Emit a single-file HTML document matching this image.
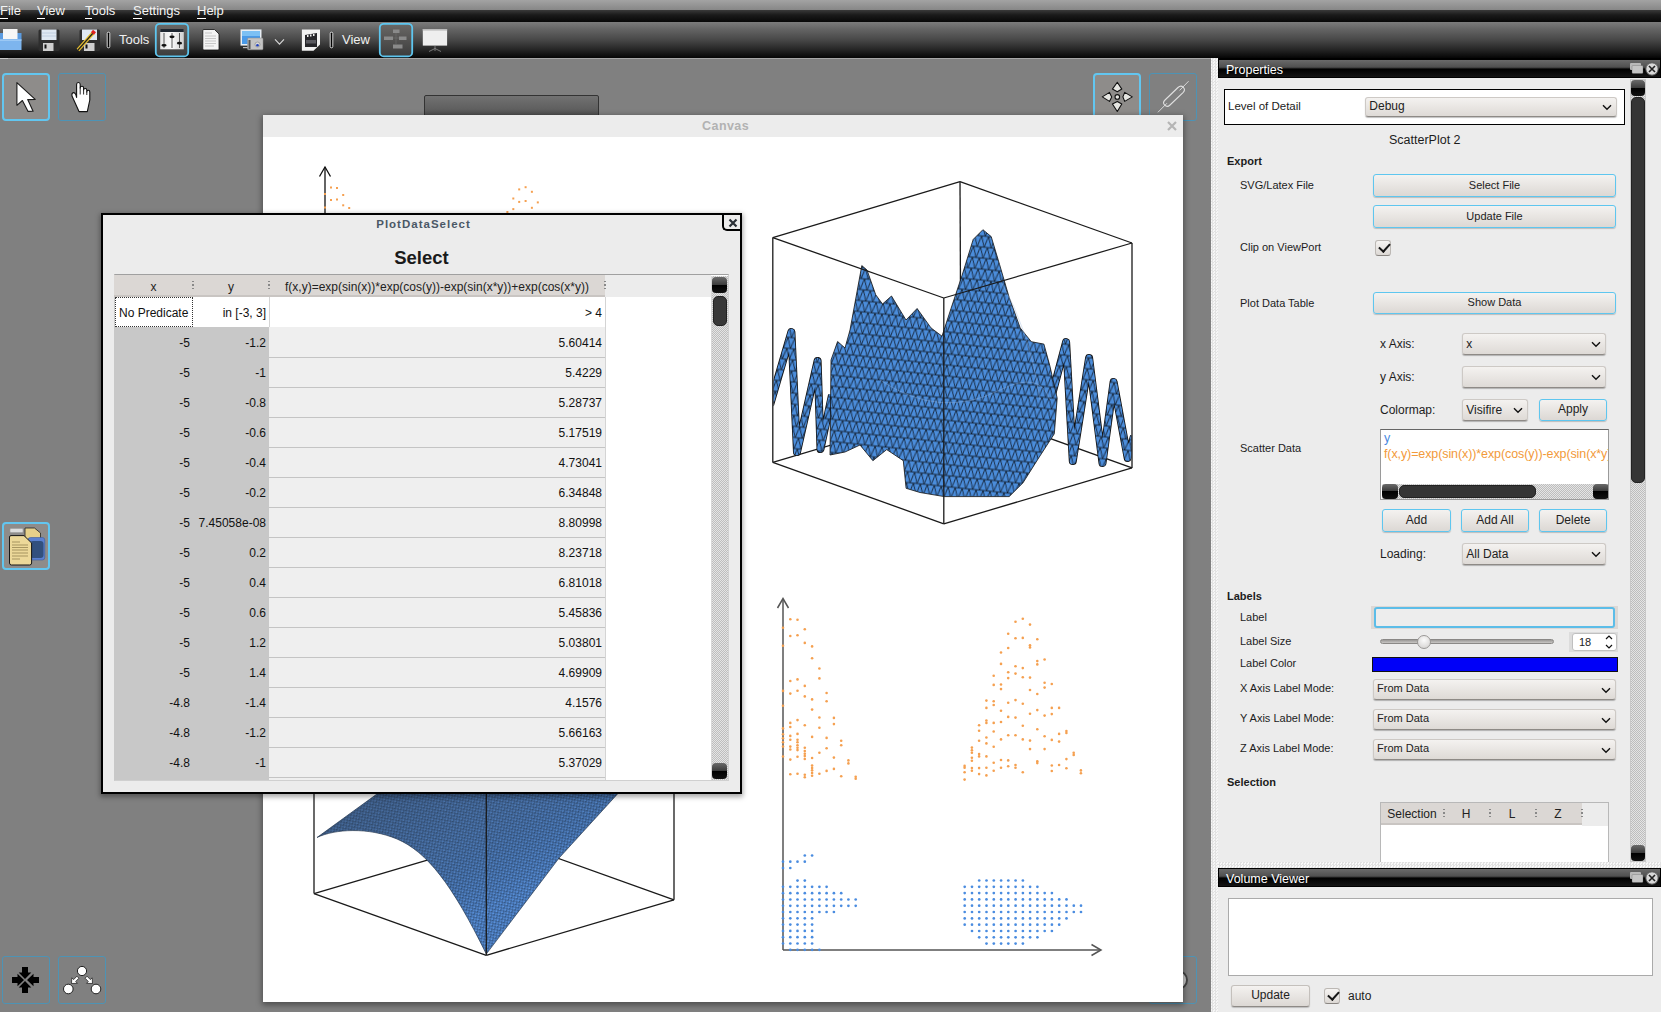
<!DOCTYPE html>
<html><head><meta charset="utf-8">
<style>
*{box-sizing:border-box;margin:0;padding:0}
html,body{width:1661px;height:1012px;overflow:hidden;background:#808080;font-family:"Liberation Sans",sans-serif;font-size:12px;color:#222}
.a{position:absolute}
#menubar{left:0;top:0;width:1661px;height:22px;background:linear-gradient(#a3a3a3 0px,#878787 10px,#393939 10px,#1a1a1a 15px,#080808 22px)}
#menubar span{position:absolute;top:3px;color:#f4f4f4;font-size:13px}
#menubar span u{text-decoration:none;border-bottom:1px solid #fff}
#toolbar{left:0;top:22px;width:1661px;height:36px;background:linear-gradient(#7c7c7c 0px,#626262 8px,#474747 18px,#242424 28px,#050505 36px)}
#toolbar .t{position:absolute;color:#f0f0f0;font-size:13px;top:9px}
.sep{position:absolute;width:4px;height:18px;top:9px;border:1px solid #ddd;border-radius:2px;background:#111}
.tbact{position:absolute;width:34px;height:34px;top:1px;border:2px solid #5bc0ea;border-radius:4px;background:linear-gradient(#5a5a5a,#3a3a3a)}
.toolbtn{position:absolute;width:48px;height:48px;border:1px solid #4d93b5;border-radius:3px}
.toolbtn.act{border:2px solid #62c6f0;background:#8e8c8a;border-radius:4px}
.panel{background:#ececec}
.dtitle{position:absolute;height:19px;overflow:hidden;border:1px solid #000;background:linear-gradient(#6a6a6a 0px,#505050 7px,#333 8px,#000 9px,#141414 17px);color:#fff;font-size:12.5px;padding-left:7px;line-height:21px}
.th{position:absolute;top:275px;height:22px;line-height:24px;text-align:center;font-size:12px;color:#222;white-space:nowrap;overflow:hidden}
.dots{width:1.5px;height:9px;background:repeating-linear-gradient(#888 0 1.2px,transparent 1.2px 3.5px)}
.td{position:absolute;height:30px;line-height:32px;font-size:12px;color:#111;white-space:nowrap}
.tr{position:absolute;left:0;width:491px;height:30px;line-height:32px;font-size:12px;color:#111;white-space:nowrap}
.tr .cx{position:absolute;left:0;width:76px;text-align:right}
.tr .cy{position:absolute;left:79px;width:73px;text-align:right}
.tr .cf{position:absolute;left:155px;width:333px;text-align:right}
.tr:after{content:"";position:absolute;left:155px;width:336px;bottom:-1px;height:1px;background:#c4c4c4}
.sbbtn{width:15px;height:16px;border-radius:4px;background:linear-gradient(#6a6a6a 0,#3a3a3a 8px,#000 8px,#111 16px)}
.lbl{position:absolute;white-space:nowrap;color:#1c1c1c;line-height:normal}
.cb{position:absolute;white-space:nowrap;color:#222;background:linear-gradient(#f4f2f0,#dedad6);border:1px solid #cdc9c5;border-bottom-color:#8e8a86;border-radius:3px;box-shadow:0 1px 1px rgba(0,0,0,0.25)}
.chev{display:block}
.btn{position:absolute;white-space:nowrap;color:#222;text-align:center;background:linear-gradient(#f4f2f0,#dcd8d4);border:1.5px solid #5ec6ef;border-radius:3px;box-shadow:0 1px 1px rgba(0,0,0,0.2)}
.btn.nb{border:1px solid #c4c0bc;border-bottom-color:#8e8a86}
.chk{position:absolute;width:16px;height:16px;border-radius:3px;background:linear-gradient(#f6f4f2,#dcd8d4);border:1px solid #bcb8b4;border-bottom-color:#8a8682}
.chk:after{content:"";position:absolute;left:2.5px;top:2px;width:9px;height:5px;border-left:2.2px solid #161616;border-bottom:2.2px solid #161616;transform:rotate(-48deg)}
.th2{position:absolute;top:803px;height:22px;line-height:22px;text-align:center;font-size:12px;color:#222;white-space:nowrap}
.sbbtnh{width:16px;height:15px;border-radius:4px;background:linear-gradient(#6a6a6a 0,#3a3a3a 7px,#000 7px,#111 15px)}
</style></head>
<body>
<!-- menu bar -->
<div id="menubar" class="a">
 <span style="left:0px"><u>F</u>ile</span>
 <span style="left:37px"><u>V</u>iew</span>
 <span style="left:85px"><u>T</u>ools</span>
 <span style="left:133px"><u>S</u>ettings</span>
 <span style="left:197px"><u>H</u>elp</span>
</div>
<!-- toolbar -->
<div id="toolbar" class="a">
 <svg class="a" style="left:0;top:0" width="460" height="36" viewBox="0 22 460 36">
  <!-- printer -->
  <rect x="0" y="33" width="21.5" height="7" fill="#5b9be0"/>
  <rect x="3" y="29" width="14.5" height="10" fill="#f6f6f6"/>
  <rect x="0" y="39.5" width="21.5" height="10.5" fill="#7db5ee"/>
  <rect x="0" y="39.5" width="21.5" height="1.2" fill="#a9d0f7"/>
  <!-- floppy -->
  <rect x="38.5" y="29.5" width="21" height="21.5" rx="1.5" fill="#2e2e2e"/>
  <rect x="41.5" y="29.5" width="15" height="10.5" fill="#dfe8f2"/>
  <line x1="42" y1="33" x2="56" y2="33" stroke="#b8c8dc" stroke-width="0.8"/>
  <line x1="42" y1="36" x2="56" y2="36" stroke="#b8c8dc" stroke-width="0.8"/>
  <rect x="43" y="43" width="10.5" height="8" fill="#cfcfcf"/>
  <rect x="44.5" y="44.5" width="2" height="4" fill="#111"/>
  <!-- floppy + pencil -->
  <rect x="79.5" y="29.5" width="20.5" height="21.5" rx="1.5" fill="#2e2e2e"/>
  <rect x="82" y="29.5" width="15" height="10.5" fill="#dfe8f2"/>
  <rect x="84" y="43" width="10.5" height="8" fill="#cfcfcf"/>
  <rect x="85.5" y="44.5" width="2" height="4" fill="#111"/>
  <line x1="78" y1="50" x2="93.5" y2="32.5" stroke="#e8c030" stroke-width="3.6"/>
  <line x1="78" y1="50" x2="93.5" y2="32.5" stroke="#222" stroke-width="1.2"/>
  <line x1="92.5" y1="33.5" x2="94.5" y2="31" stroke="#e02020" stroke-width="3.8"/>
  <!-- separator -->
  <rect x="107.2" y="32.2" width="2.6" height="15.6" rx="1.3" fill="#000" stroke="#f0f0f0" stroke-width="0.9"/>
  <!-- active button 1 -->
  <rect x="155.8" y="23.8" width="32.4" height="32.6" rx="4" fill="url(#btng)" stroke="#5ec6ef" stroke-width="1.8"/>
  <defs>
   <linearGradient id="btng" x1="0" y1="0" x2="0" y2="1"><stop offset="0" stop-color="#6a6866"/><stop offset="1" stop-color="#3c3c3c"/></linearGradient>
   <linearGradient id="mixg" x1="0" y1="0" x2="1" y2="0"><stop offset="0" stop-color="#e6e6e6"/><stop offset="0.5" stop-color="#fafafa"/><stop offset="1" stop-color="#d0d0d0"/></linearGradient>
  </defs>
  <rect x="160.2" y="29" width="23.6" height="20.3" fill="url(#mixg)"/>
  <rect x="160.2" y="29" width="23.6" height="3" fill="#1e2630"/>
  <line x1="164" y1="33" x2="164" y2="48" stroke="#333" stroke-width="0.8"/>
  <line x1="172" y1="33" x2="172" y2="48" stroke="#333" stroke-width="0.8"/>
  <line x1="179.5" y1="33" x2="179.5" y2="48" stroke="#333" stroke-width="0.8"/>
  <ellipse cx="164" cy="45.3" rx="2.6" ry="1.4" fill="#111"/>
  <ellipse cx="172" cy="36.8" rx="2.6" ry="1.4" fill="#111"/>
  <ellipse cx="179.5" cy="43.2" rx="2.6" ry="1.4" fill="#111"/>
  <!-- document -->
  <path d="M202.8 30.5 Q202.8 29.5 204 29.5 L214.5 29.5 L219 34 L219 49 Q219 50 218 50 L204 50 Q202.8 50 202.8 49 Z" fill="#f4f4f4" stroke="#111" stroke-width="0.8"/>
  <g stroke="#aaa" stroke-width="0.6"><line x1="205" y1="33" x2="212" y2="33"/><line x1="205" y1="36" x2="216" y2="36"/><line x1="205" y1="38.5" x2="216" y2="38.5"/><line x1="205" y1="41" x2="216" y2="41"/><line x1="205" y1="43.5" x2="216" y2="43.5"/><line x1="205" y1="46" x2="214" y2="46"/></g>
  <!-- monitor + camera -->
  <rect x="240.5" y="29.4" width="21" height="16.2" fill="#e8eef4"/>
  <rect x="242" y="31" width="18" height="13" fill="#4a9ae8"/>
  <rect x="242" y="31" width="18" height="5" fill="#7cc0f4"/>
  <rect x="243" y="47" width="8" height="1.2" fill="#bbb"/>
  <rect x="247.5" y="38" width="15.5" height="11.8" rx="1" fill="#c4c4c4" stroke="#888" stroke-width="0.5"/>
  <rect x="248.5" y="40" width="2" height="9" fill="#555"/>
  <circle cx="257.5" cy="44.5" r="2.5" fill="#d8d8d8" stroke="#777" stroke-width="0.5"/>
  <circle cx="257.5" cy="45.3" r="1.3" fill="#2040c0"/>
  <!-- chevron -->
  <polyline points="275,39.3 279.5,44.2 284,39.3" fill="none" stroke="#d8d8d8" stroke-width="1.1"/>
  <!-- clapboard -->
  <path d="M301.9 29.4 L320 29.4 L320 44.5 L313.5 50.7 L301.9 50.7 Z" fill="#f2f2f2"/>
  <path d="M305 35 L317 33 L317 47 L305 47 Z" fill="#26262a"/>
  <g fill="#f2f2f2"><rect x="307" y="35" width="1.5" height="2"/><rect x="310" y="34.5" width="1.5" height="2"/><rect x="313" y="34" width="1.5" height="2"/></g>
  <rect x="306" y="40" width="10" height="3.5" fill="#5a5a60"/>
  <!-- separator 2 -->
  <rect x="330.2" y="32.2" width="2.6" height="15.6" rx="1.3" fill="#000" stroke="#f0f0f0" stroke-width="0.9"/>
  <!-- active button 2 -->
  <rect x="379.8" y="23.8" width="32.4" height="32.6" rx="4" fill="url(#btng)" stroke="#5ec6ef" stroke-width="1.8"/>
  <g fill="#8a8a8a"><rect x="393" y="29.5" width="6.5" height="3.5"/><rect x="384" y="36.5" width="9" height="3.5"/><rect x="399" y="36.5" width="7.5" height="3.5"/><rect x="393" y="44.5" width="9.5" height="4"/></g>
  <g stroke="#777" stroke-width="0.5"><line x1="396" y1="33" x2="396" y2="44.5"/><line x1="393" y1="38" x2="399" y2="38"/></g>
  <!-- projector -->
  <rect x="422.8" y="29" width="24.3" height="16.6" fill="#eeeeee"/>
  <rect x="422.8" y="29" width="24.3" height="1.6" fill="#bdbdbd"/>
  <g stroke="#9a9a9a" stroke-width="0.7"><line x1="435" y1="45.6" x2="435" y2="51"/><line x1="435" y1="48.5" x2="429" y2="51.5"/><line x1="435" y1="48.5" x2="441" y2="51.5"/></g>
 </svg>
 <span class="t" style="left:119px;top:10px">Tools</span>
 <span class="t" style="left:342px;top:10px">View</span>
</div>

<!-- main area -->
<div class="a" style="left:0;top:58px;width:1212px;height:954px;background:#808080"></div>
<div class="a" style="left:0;top:58px;width:1211px;height:1px;background:#a6a6a6"></div><div class="a" style="left:0;top:58px;width:8px;height:1px;background:#c8c8c8"></div>
<!-- left tool buttons -->
<div class="toolbtn act a" style="left:2px;top:73px;width:48px;height:48px"></div>
<svg class="a" style="left:0;top:58px" width="120" height="80" viewBox="0 58 120 80">
 <path d="M16.9,82.6 L16.9,105.3 L22.4,100.5 L28.1,111.4 L33.1,111.2 L27.7,99.6 L35.2,99.4 Z" fill="#fff" stroke="#1a1a1a" stroke-width="1.1" stroke-linejoin="round"/>
 <path d="M76.6,97.4 L76.6,84.5 Q76.6,82.5 78.4,82.5 Q80.2,82.5 80.2,84.5 L80.2,88 Q80.2,86.3 82,86.3 Q83.6,86.3 83.6,88 L83.6,90 Q83.7,88.5 85.2,88.5 Q86.8,88.5 86.8,90 L86.8,92 Q86.9,90.3 88.3,90.3 Q89.8,90.3 89.8,92 L89.8,100 L87.3,111.6 L79,111.6 L72,96 Q71.5,93 73.3,92.6 Q75,92.4 75.8,94.6 Z" fill="#fff" stroke="#111" stroke-width="1.1" stroke-linejoin="round"/>
 <g stroke="#111" stroke-width="0.9"><line x1="80.2" y1="87.5" x2="80.2" y2="94.5"/><line x1="83.6" y1="89.5" x2="83.6" y2="94.5"/><line x1="86.8" y1="91.5" x2="86.8" y2="95"/></g>
</svg>
<div class="toolbtn a" style="left:58px;top:73px;width:48px;height:48px"></div>
<!-- doc button -->
<div class="toolbtn act a" style="left:2px;top:522px;width:48px;height:48px"></div>
<svg class="a" style="left:0;top:520px" width="60" height="60" viewBox="0 520 60 60">
 <rect x="10" y="528.5" width="13" height="4" rx="1" fill="#ddd" stroke="#999" stroke-width="0.5"/>
 <path d="M25 528 L34.5 528 L40.5 533 L40.5 541 L25 541 Z" fill="#e6d08a" stroke="#222" stroke-width="0.8"/>
 <rect x="28" y="537.5" width="16.8" height="22.5" rx="2.5" fill="#5a80d0" stroke="#3c5a9a" stroke-width="0.6"/>
 <rect x="30" y="541" width="13.5" height="17" rx="3" fill="#32507e"/>
 <path d="M9.5 537 Q9.5 535.6 11 535.6 L24 535.6 L31.6 543 L31.6 563 Q31.6 565 29.6 565 L11.5 565 Q9.5 565 9.5 563 Z" fill="#ecd899" stroke="#161616" stroke-width="1"/>
 <g stroke="#7a6a3a" stroke-width="0.6"><line x1="12" y1="542" x2="20" y2="542"/><line x1="12" y1="545" x2="28" y2="545"/><line x1="12" y1="547.5" x2="28" y2="547.5"/><line x1="12" y1="550" x2="28" y2="550"/><line x1="12" y1="553" x2="28" y2="553"/><line x1="12" y1="556" x2="28" y2="556"/><line x1="12" y1="559" x2="20" y2="559"/></g>
</svg>
<!-- bottom buttons -->
<div class="toolbtn a" style="left:2px;top:956px;width:48px;height:48px"></div>
<div class="toolbtn a" style="left:58px;top:956px;width:48px;height:48px"></div>
<svg class="a" style="left:0;top:950px" width="120" height="60" viewBox="0 950 120 60">
 <g fill="#000">
  <path d="M22 967 L28 967 L28 972.5 L31.3 972.5 L25 979 L18.7 972.5 L22 972.5 Z"/>
  <path d="M22 993 L28 993 L28 987.5 L31.3 987.5 L25 981 L18.7 987.5 L22 987.5 Z"/>
  <path d="M12 977 L12 983 L17.5 983 L17.5 986.3 L24 980 L17.5 973.7 L17.5 977 Z"/>
  <path d="M39 977 L39 983 L33.5 983 L33.5 986.3 L27 980 L33.5 973.7 L33.5 977 Z"/>
 </g>
 <g fill="#fff" stroke="#111" stroke-width="0.9">
  <circle cx="82" cy="971" r="4.6"/><circle cx="68.3" cy="989" r="4.8"/><circle cx="96" cy="989" r="4.8"/>
  <path d="M71.5,983.5 L71.8,977.8 L73.7,979.6 L76.9,976.2 L78.9,978.2 L75.7,981.5 L77.4,983.3 Z" stroke-width="0.7" stroke-linejoin="round"/>
  <path d="M92.5,983.5 L92.2,977.8 L90.3,979.6 L87.1,976.2 L85.1,978.2 L88.3,981.5 L86.6,983.3 Z" stroke-width="0.7" stroke-linejoin="round"/>
 </g>
</svg>
<!-- top right buttons -->
<div class="toolbtn act a" style="left:1093px;top:73px;width:48px;height:48px"></div>
<div class="toolbtn a" style="left:1149px;top:73px;width:48px;height:48px"></div>
<svg class="a" style="left:1090px;top:70px" width="120" height="60" viewBox="1090 70 120 60">
 <g fill="#e6e6e2" stroke="#111" stroke-width="1.1" stroke-linejoin="round">
  <path d="M1117.3 82.3 L1121.8 89.1 L1117.3 91.7 L1112.4 89.1 Z"/>
  <path d="M1117.3 111.5 L1121.8 104 L1117.3 101.4 L1112.4 104 Z"/>
  <path d="M1102.3 96.9 L1109.5 92.4 L1111.7 96.9 L1109.5 101.4 Z"/>
  <path d="M1132.3 96.9 L1124.7 92.4 L1122.9 96.9 L1124.7 101.4 Z"/>
  <circle cx="1117.3" cy="96.9" r="2.3"/>
 </g>
 <g fill="none" stroke="#e0e0e0" stroke-width="0.9">
  <line x1="1157.9" y1="112.3" x2="1167" y2="103.2"/><line x1="1179.6" y1="90.4" x2="1188.6" y2="81.2"/>
  <path d="M1165 100 L1178 87.5 Q1180.8 84.8 1183.3 87.3 Q1185.8 89.8 1183 92.6 L1170 105 Q1167.2 107.7 1164.7 105.2 Q1162.2 102.7 1165 100 Z" stroke-width="1.1"/>
 </g>
</svg>
<div class="toolbtn a" style="left:1149px;top:956px;width:48px;height:48px"></div>
<div class="a" style="left:1168px;top:970px;width:20px;height:20px;border-radius:50%;background:#ccc;border:2px solid #444"></div>
<!-- canvas tab -->
<div class="a" style="left:424px;top:95px;width:175px;height:22px;border:1px solid #333;border-radius:2px 2px 0 0;background:linear-gradient(#727272,#5e5e5e 70%,#4c4c4c)"></div>
<!-- canvas -->
<div class="a" style="left:263px;top:115px;width:920px;height:887px;background:#fff;box-shadow:0px 2px 6px 1px rgba(0,0,0,0.4)">
 <div class="a" style="left:0;top:0;width:920px;height:22px;background:#ececec"></div>
 <div class="a" style="left:439px;top:4px;font-weight:bold;color:#b2b2b2;font-size:12.5px;letter-spacing:0.45px">Canvas</div>
 <svg class="a" style="left:903px;top:5px" width="12" height="12"><path d="M2 2 L10 10 M10 2 L2 10" stroke="#b5b5b5" stroke-width="2.2"/></svg>
</div>

<!-- splitter -->
<div class="a" style="left:1211px;top:58px;width:7px;height:954px;background:repeating-conic-gradient(#e2e2e2 0 25%,#f6f6f6 0 50%) 0 0/3px 3px"></div>

<!-- volume viewer -->
<div class="a panel" style="left:1218px;top:862px;width:443px;height:150px"></div>
<div class="a" style="left:1218px;top:863px;width:443px;height:4px;background:repeating-conic-gradient(#e2e2e2 0 25%,#f6f6f6 0 50%) 0 0/3px 3px"></div>
<div class="dtitle" style="left:1218px;top:868px;width:443px">Volume Viewer</div>
<!-- properties dock -->
<div class="a" style="left:1218px;top:58px;width:443px;height:1px;background:#000"></div>
<div class="a panel" style="left:1218px;top:59px;width:443px;height:809px">
</div>
<div class="dtitle" style="left:1218px;top:59px;width:443px">Properties</div>
<div class="a" style="left:1224px;top:89px;width:401px;height:36px;background:#fff;border:1.4px solid #000"></div>
<div class="lbl" style="left:1228px;top:100px;font-size:11.5px;">Level of Detail</div>
<div class="cb" style="left:1365px;top:97px;width:252px;height:20px;font-size:12px;line-height:16px">&nbsp;Debug<span style="position:absolute;right:4px;top:6px"><svg class="chev" width="10" height="7" viewBox="0 0 10 7"><polyline points="1,1.2 5,5.2 9,1.2" fill="none" stroke="#111" stroke-width="1.4"/></svg></span></div>
<div class="lbl" style="left:1389px;top:133px;font-size:12.5px;">ScatterPlot 2</div>
<div class="lbl" style="left:1227px;top:154.5px;font-size:11px;font-weight:bold;">Export</div>
<div class="lbl" style="left:1240px;top:179px;font-size:11px;">SVG/Latex File</div>
<div class="btn" style="left:1373px;top:174px;width:243px;height:23px;font-size:11px;line-height:20px">Select File</div>
<div class="btn" style="left:1373px;top:205px;width:243px;height:23px;font-size:11px;line-height:20px">Update File</div>
<div class="lbl" style="left:1240px;top:240.5px;font-size:11px;">Clip on ViewPort</div>
<div class="chk" style="left:1375px;top:240px"></div>
<div class="lbl" style="left:1240px;top:297px;font-size:11px;">Plot Data Table</div>
<div class="btn" style="left:1373px;top:292px;width:243px;height:22px;font-size:11px;line-height:19px">Show Data</div>
<div class="lbl" style="left:1380px;top:337.4px;font-size:12px;">x Axis:</div>
<div class="cb" style="left:1462px;top:333px;width:144px;height:22px;font-size:12px;line-height:20px">&nbsp;x<span style="position:absolute;right:4px;top:7px"><svg class="chev" width="10" height="7" viewBox="0 0 10 7"><polyline points="1,1.2 5,5.2 9,1.2" fill="none" stroke="#111" stroke-width="1.4"/></svg></span></div>
<div class="lbl" style="left:1380px;top:370.2px;font-size:12px;">y Axis:</div>
<div class="cb" style="left:1462px;top:366px;width:144px;height:22px;font-size:12px;line-height:20px"><span style="position:absolute;right:4px;top:7px"><svg class="chev" width="10" height="7" viewBox="0 0 10 7"><polyline points="1,1.2 5,5.2 9,1.2" fill="none" stroke="#111" stroke-width="1.4"/></svg></span></div>
<div class="lbl" style="left:1380px;top:402.8px;font-size:12px;">Colormap:</div>
<div class="cb" style="left:1462px;top:399px;width:66px;height:22px;font-size:12px;line-height:20px">&nbsp;Visifire<span style="position:absolute;right:4px;top:7px"><svg class="chev" width="10" height="7" viewBox="0 0 10 7"><polyline points="1,1.2 5,5.2 9,1.2" fill="none" stroke="#111" stroke-width="1.4"/></svg></span></div>
<div class="btn" style="left:1539px;top:399px;width:68px;height:22px;font-size:12px;line-height:19px">Apply</div>
<div class="lbl" style="left:1240px;top:441.7px;font-size:11px;">Scatter Data</div>
<div class="a" style="left:1380px;top:429px;width:229px;height:71px;background:#fff;border:1px solid #9a9a9a;border-top-color:#666;overflow:hidden">
 <div class="a" style="left:3px;top:1px;font-size:12.5px;color:#4a8ae0">y</div>
 <div class="a" style="left:3px;top:17px;font-size:12.5px;color:#f29a3a;white-space:nowrap;letter-spacing:-0.1px">f(x,y)=exp(sin(x))*exp(cos(y))-exp(sin(x*y))+exp(cos(x*y))</div>
 <div class="a" style="left:1px;top:54px;width:226px;height:15px;background:repeating-conic-gradient(#bdbdbd 0 25%,#e4e4e4 0 50%) 0 0/2px 2px"></div>
 <div class="a sbbtnh" style="left:1px;top:54px"></div>
 <div class="a" style="left:18px;top:55px;width:137px;height:13px;border-radius:5px;background:#353535;border:1px solid #222"></div>
 <div class="a sbbtnh" style="left:212px;top:54px"></div>
</div>
<div class="btn" style="left:1382px;top:509px;width:69px;height:23px;font-size:12px;line-height:20px">Add</div>
<div class="btn" style="left:1461px;top:509px;width:68px;height:23px;font-size:12px;line-height:20px">Add All</div>
<div class="btn" style="left:1539px;top:509px;width:68px;height:23px;font-size:12px;line-height:20px">Delete</div>
<div class="lbl" style="left:1380px;top:547px;font-size:12px;">Loading:</div>
<div class="cb" style="left:1462px;top:543px;width:144px;height:22px;font-size:12px;line-height:20px">&nbsp;All Data<span style="position:absolute;right:4px;top:7px"><svg class="chev" width="10" height="7" viewBox="0 0 10 7"><polyline points="1,1.2 5,5.2 9,1.2" fill="none" stroke="#111" stroke-width="1.4"/></svg></span></div>
<div class="lbl" style="left:1227px;top:589.5px;font-size:11px;font-weight:bold;">Labels</div>
<div class="lbl" style="left:1240px;top:610.7px;font-size:11px;">Label</div>
<div class="a" style="left:1371px;top:606px;width:247px;height:23px;background:#dcd8d5"></div>
<div class="a" style="left:1374px;top:607px;width:241px;height:21px;background:#ededed;border:2px solid #5cbde8;border-radius:3px"></div>
<div class="lbl" style="left:1240px;top:634.5px;font-size:11px;">Label Size</div>
<div class="a" style="left:1380px;top:639px;width:174px;height:5px;border-radius:3px;background:linear-gradient(#9a9896,#c8c6c4);border:1px solid #8a8886"></div>
<div class="a" style="left:1417px;top:635px;width:14px;height:14px;border-radius:50%;background:radial-gradient(circle at 50% 35%,#fbfbfb,#d0cecc);border:1px solid #9a9896"></div>
<div class="a" style="left:1569px;top:632px;width:49px;height:20px;background:#dcdcdc"></div>
<div class="a" style="left:1572px;top:633px;width:45px;height:18px;background:#fff;border:1px solid #c0c0c0;border-radius:3px;font-size:11px;line-height:17px;padding-left:6px">18</div>
<svg class="a" style="left:1603px;top:633px" width="12" height="18"><polyline points="3,6 6,3 9,6" fill="none" stroke="#111" stroke-width="1.2"/><polyline points="3,12 6,15 9,12" fill="none" stroke="#111" stroke-width="1.2"/></svg>
<div class="lbl" style="left:1240px;top:656.5px;font-size:11px;">Label Color</div>
<div class="a" style="left:1372px;top:657px;width:246px;height:15px;background:#0000f8;border:1px solid #111"></div>
<div class="lbl" style="left:1240px;top:681.7px;font-size:11px;">X Axis Label Mode:</div>
<div class="cb" style="left:1373px;top:679px;width:243px;height:21px;font-size:11px;line-height:16px">&nbsp;From Data<span style="position:absolute;right:4px;top:7px"><svg class="chev" width="10" height="7" viewBox="0 0 10 7"><polyline points="1,1.2 5,5.2 9,1.2" fill="none" stroke="#111" stroke-width="1.4"/></svg></span></div>
<div class="lbl" style="left:1240px;top:711.8px;font-size:11px;">Y Axis Label Mode:</div>
<div class="cb" style="left:1373px;top:709px;width:243px;height:21px;font-size:11px;line-height:16px">&nbsp;From Data<span style="position:absolute;right:4px;top:7px"><svg class="chev" width="10" height="7" viewBox="0 0 10 7"><polyline points="1,1.2 5,5.2 9,1.2" fill="none" stroke="#111" stroke-width="1.4"/></svg></span></div>
<div class="lbl" style="left:1240px;top:741.9px;font-size:11px;">Z Axis Label Mode:</div>
<div class="cb" style="left:1373px;top:739px;width:243px;height:21px;font-size:11px;line-height:16px">&nbsp;From Data<span style="position:absolute;right:4px;top:7px"><svg class="chev" width="10" height="7" viewBox="0 0 10 7"><polyline points="1,1.2 5,5.2 9,1.2" fill="none" stroke="#111" stroke-width="1.4"/></svg></span></div>
<div class="lbl" style="left:1227px;top:775.7px;font-size:11px;font-weight:bold;">Selection</div>
<div class="a" style="left:1380px;top:802px;width:229px;height:60px;background:#fff;border:1px solid #b8b8b8;border-bottom:none"></div>
<div class="a" style="left:1582px;top:803px;width:26px;height:23px;background:#ececec"></div>
<div class="a" style="left:1218px;top:862px;width:443px;height:6px;background:repeating-conic-gradient(#e0e0e0 0 25%,#f8f8f8 0 50%) 0 0/3px 3px"></div>
<div class="a" style="left:1381px;top:803px;width:201px;height:22px;background:#dbd7d4;border-bottom:2px solid #c9c5c2"></div>
<div class="a th2" style="left:1381px;width:62px">Selection</div>
<div class="a th2" style="left:1443px;width:46px">H</div>
<div class="a th2" style="left:1489px;width:46px">L</div>
<div class="a th2" style="left:1535px;width:46px">Z</div>
<div class="a dots" style="left:1443px;top:809px"></div><div class="a dots" style="left:1489px;top:809px"></div><div class="a dots" style="left:1535px;top:809px"></div><div class="a dots" style="left:1581px;top:809px"></div>
<div class="a" style="left:1630px;top:79px;width:16px;height:783px;background:repeating-conic-gradient(#bdbdbd 0 25%,#e4e4e4 0 50%) 0 0/2px 2px;border:1px solid #c8c8c8"></div>
<div class="a sbbtn" style="left:1631px;top:80px;width:14px"></div>
<div class="a" style="left:1631px;top:97px;width:14px;height:386px;border-radius:5px;background:#353535;border:1px solid #222"></div>
<div class="a sbbtn" style="left:1631px;top:845px;width:14px"></div>
<svg class="a" style="left:1628px;top:60px" width="33" height="18"><rect x="2" y="3" width="11" height="7" rx="1" fill="#b8b8b8"/><rect x="4" y="5.5" width="11" height="8" rx="1" fill="#c4c4c4" stroke="#555" stroke-width="0.3"/><circle cx="24" cy="9" r="6.2" fill="#d8d8d8" stroke="#555" stroke-width="1"/><path d="M21 6 L27 12 M27 6 L21 12" stroke="#222" stroke-width="1.6"/></svg>
<svg class="a" style="left:1628px;top:869px" width="33" height="18"><rect x="2" y="3" width="11" height="7" rx="1" fill="#b8b8b8"/><rect x="4" y="5.5" width="11" height="8" rx="1" fill="#c4c4c4" stroke="#555" stroke-width="0.3"/><circle cx="24" cy="9" r="6.2" fill="#d8d8d8" stroke="#555" stroke-width="1"/><path d="M21 6 L27 12 M27 6 L21 12" stroke="#222" stroke-width="1.6"/></svg>
<div class="a" style="left:1228px;top:898px;width:425px;height:78px;background:#fff;border:1px solid #aaa"></div>
<div class="btn nb" style="left:1231px;top:985px;width:79px;height:22px;font-size:12px;line-height:19px">Update</div>
<div class="chk" style="left:1324px;top:988px"></div>
<div class="lbl" style="left:1348px;top:989px;font-size:12px;">auto</div>


<!-- canvas content -->
<svg class="a" style="left:0;top:0;pointer-events:none" width="1661" height="1012" viewBox="0 0 1661 1012">
<defs>
<pattern id="mesh" width="7" height="11" patternUnits="userSpaceOnUse" patternTransform="rotate(6)">
 <rect width="7" height="11" fill="#4b8ddb"/>
 <path d="M0 0 L7 0 M0 11 L7 11 M0 0 L3.5 11 L7 0" stroke="#0d1420" stroke-width="0.8" fill="none"/>
</pattern>
<pattern id="mesh2" width="4" height="4" patternUnits="userSpaceOnUse" patternTransform="rotate(-35)">
 <rect width="4" height="4" fill="#5a94e0"/>
 <path d="M0 0 L4 0 M0 0 L2 4 L4 0" stroke="#0e1626" stroke-width="0.45" fill="none"/>
</pattern>
<linearGradient id="saddleshade" x1="0" y1="0" x2="1" y2="1">
 <stop offset="0" stop-color="#2a3340" stop-opacity="0.5"/><stop offset="0.4" stop-color="#2a3340" stop-opacity="0.25"/><stop offset="0.65" stop-color="#000" stop-opacity="0"/>
</linearGradient>
</defs>
<g stroke="#111" stroke-width="1.3" fill="none"><line x1="325" y1="167" x2="325" y2="214"/><polyline points="319.5,176.5 325,167 330.5,176.5"/></g>
<g fill="#f5a050"><rect x="330.0" y="186.5" width="2" height="2"/><rect x="336.0" y="187.0" width="2" height="2"/><rect x="324.0" y="193.0" width="2" height="2"/><rect x="342.2" y="194.0" width="2" height="2"/><rect x="330.0" y="199.0" width="2" height="2"/><rect x="336.0" y="198.5" width="2" height="2"/><rect x="342.2" y="204.3" width="2" height="2"/><rect x="324.0" y="206.5" width="2" height="2"/><rect x="348.2" y="207.0" width="2" height="2"/><rect x="518.2" y="188.4" width="2" height="2"/><rect x="524.6" y="186.2" width="2" height="2"/><rect x="530.9" y="190.8" width="2" height="2"/><rect x="512.3" y="197.5" width="2" height="2"/><rect x="518.2" y="200.9" width="2" height="2"/><rect x="524.6" y="200.0" width="2" height="2"/><rect x="536.8" y="201.4" width="2" height="2"/><rect x="512.3" y="208.1" width="2" height="2"/><rect x="530.9" y="206.8" width="2" height="2"/><rect x="506.4" y="211.0" width="2" height="2"/></g>
<line x1="772.8" y1="237.6" x2="960" y2="181.7" stroke="#1a1a1a" stroke-width="1.3"/><line x1="960" y1="181.7" x2="1132" y2="243" stroke="#1a1a1a" stroke-width="1.3"/><line x1="960" y1="181.7" x2="961" y2="406.5" stroke="#1a1a1a" stroke-width="1.3"/><line x1="772.8" y1="462.4" x2="961" y2="406.5" stroke="#1a1a1a" stroke-width="1.3"/><line x1="961" y1="406.5" x2="1132" y2="467.9" stroke="#1a1a1a" stroke-width="1.3"/>
<clipPath id="boxclip"><rect x="773.5" y="150" width="358" height="400"/></clipPath><g clip-path="url(#boxclip)">
<polyline points="770,405 791.4,332 797,452 817.6,361 820.5,449 832,395" fill="none" stroke="#111" stroke-width="8" stroke-linejoin="round"/>
<polyline points="770,405 791.4,332 797,452 817.6,361 820.5,449 832,395" fill="none" stroke="url(#mesh)" stroke-width="6.4" stroke-linejoin="round"/>
<polyline points="1052,395 1066.1,342 1072.8,461 1089.1,358 1102.5,463 1113.6,382 1127.7,458 1134,436" fill="none" stroke="#111" stroke-width="8" stroke-linejoin="round"/>
<polyline points="1052,395 1066.1,342 1072.8,461 1089.1,358 1102.5,463 1113.6,382 1127.7,458 1134,436" fill="none" stroke="url(#mesh)" stroke-width="6.4" stroke-linejoin="round"/>
<polygon points="830,455 831,360 837.6,341.5 845,348 850,330 861.8,265.6 867,270 875.7,294.7 882.5,304 891.5,296 906,320 917.1,308.5 931,327.9 942,336.2 951,308.5 962.1,275.3 973.2,239.4 982.9,229.7 991.2,236.6 999.5,264.3 1009.2,297.5 1020.2,327.9 1031.3,341.7 1043.9,344.1 1049.8,365.6 1057.2,398.2 1054.3,433.8 1038,459 1023,482.8 1009.2,496.6 944.3,496.6 920,492.5 906.1,488.3 903.3,460.7 886.7,449.6 872.9,460.7 860,445 845,452" fill="url(#mesh)" stroke="#111" stroke-width="0.8"/>
</g>
<g stroke="#9ab8e0" stroke-width="0.6" fill="none" opacity="0.6"><path d="M880 380 Q940 420 1000 390 Q1040 370 1050 400"/><path d="M1000 280 Q1030 330 1040 400"/></g>
<line x1="772.8" y1="237.6" x2="943.8" y2="298" stroke="#1a1a1a" stroke-width="1.3"/><line x1="943.8" y1="298" x2="1132" y2="243" stroke="#1a1a1a" stroke-width="1.3"/><line x1="772.8" y1="237.6" x2="772.8" y2="462.4" stroke="#1a1a1a" stroke-width="1.3"/><line x1="1132" y1="243" x2="1132" y2="467.9" stroke="#1a1a1a" stroke-width="1.3"/><line x1="943.8" y1="298" x2="943.8" y2="523.8" stroke="#1a1a1a" stroke-width="1.3"/><line x1="772.8" y1="462.4" x2="943.8" y2="523.8" stroke="#1a1a1a" stroke-width="1.3"/><line x1="943.8" y1="523.8" x2="1132" y2="467.9" stroke="#1a1a1a" stroke-width="1.3"/>
<line x1="314" y1="893.6" x2="501.7" y2="838.1" stroke="#1a1a1a" stroke-width="1.3"/><line x1="501.7" y1="838.1" x2="674" y2="899.8" stroke="#1a1a1a" stroke-width="1.3"/><line x1="501.7" y1="794" x2="501.7" y2="838.1" stroke="#1a1a1a" stroke-width="1.3"/>
<path d="M317,837.5 C335,829 368,827 397,839 C427,852 452,884 486.3,954.1 L559.1,858 L618.4,793 L378.3,793 Z" fill="url(#mesh2)" stroke="#1a2a40" stroke-width="0.6"/>
<path d="M317,837.5 C335,829 368,827 397,839 C427,852 452,884 486.3,954.1 L559.1,858 L618.4,793 L378.3,793 Z" fill="url(#saddleshade)"/>
<line x1="314" y1="794" x2="314" y2="893.6" stroke="#1a1a1a" stroke-width="1.3"/><line x1="674" y1="794" x2="674" y2="899.8" stroke="#1a1a1a" stroke-width="1.3"/><line x1="486.3" y1="794" x2="486.3" y2="955.3" stroke="#1a1a1a" stroke-width="1.3"/><line x1="314" y1="893.6" x2="486.3" y2="955.3" stroke="#1a1a1a" stroke-width="1.3"/><line x1="486.3" y1="955.3" x2="674" y2="899.8" stroke="#1a1a1a" stroke-width="1.3"/>
<g stroke="#555" stroke-width="1.5" fill="none"><line x1="783" y1="599" x2="783" y2="950"/><line x1="783" y1="950" x2="1101" y2="950"/><polyline points="777.5,608 783,598.5 788.5,608"/><polyline points="1091.5,944.5 1101,950 1091.5,955.5"/></g>
<g fill="#f5a050"><circle cx="783.0" cy="627.7" r="1.3"/><circle cx="783.0" cy="645.8" r="1.3"/><circle cx="783.0" cy="690.9" r="1.3"/><circle cx="783.0" cy="705.7" r="1.3"/><circle cx="783.0" cy="728.4" r="1.3"/><circle cx="783.0" cy="734.3" r="1.3"/><circle cx="783.0" cy="738.3" r="1.3"/><circle cx="783.0" cy="742.2" r="1.3"/><circle cx="783.0" cy="746.6" r="1.3"/><circle cx="783.0" cy="756.5" r="1.3"/><circle cx="790.3" cy="619.2" r="1.3"/><circle cx="790.3" cy="636.0" r="1.3"/><circle cx="790.3" cy="681.0" r="1.3"/><circle cx="790.3" cy="693.6" r="1.3"/><circle cx="790.3" cy="722.9" r="1.3"/><circle cx="790.3" cy="727.0" r="1.3"/><circle cx="790.3" cy="735.9" r="1.3"/><circle cx="790.3" cy="739.7" r="1.3"/><circle cx="790.3" cy="746.6" r="1.3"/><circle cx="790.3" cy="749.5" r="1.3"/><circle cx="790.3" cy="759.6" r="1.3"/><circle cx="790.3" cy="774.2" r="1.3"/><circle cx="797.5" cy="619.8" r="1.3"/><circle cx="797.5" cy="635.2" r="1.3"/><circle cx="797.5" cy="679.4" r="1.3"/><circle cx="797.5" cy="690.7" r="1.3"/><circle cx="797.5" cy="720.1" r="1.3"/><circle cx="797.5" cy="733.9" r="1.3"/><circle cx="797.5" cy="739.7" r="1.3"/><circle cx="797.5" cy="742.2" r="1.3"/><circle cx="797.5" cy="745.2" r="1.3"/><circle cx="797.5" cy="747.8" r="1.3"/><circle cx="797.5" cy="750.1" r="1.3"/><circle cx="797.5" cy="756.7" r="1.3"/><circle cx="797.5" cy="773.8" r="1.3"/><circle cx="804.8" cy="629.2" r="1.3"/><circle cx="804.8" cy="642.9" r="1.3"/><circle cx="804.8" cy="685.9" r="1.3"/><circle cx="804.8" cy="696.4" r="1.3"/><circle cx="804.8" cy="725.2" r="1.3"/><circle cx="804.8" cy="747.8" r="1.3"/><circle cx="804.8" cy="751.1" r="1.3"/><circle cx="804.8" cy="753.7" r="1.3"/><circle cx="804.8" cy="756.1" r="1.3"/><circle cx="804.8" cy="759.0" r="1.3"/><circle cx="804.8" cy="774.8" r="1.3"/><circle cx="804.8" cy="777.2" r="1.3"/><circle cx="812.1" cy="646.4" r="1.3"/><circle cx="812.1" cy="658.3" r="1.3"/><circle cx="812.1" cy="699.4" r="1.3"/><circle cx="812.1" cy="709.6" r="1.3"/><circle cx="812.1" cy="736.9" r="1.3"/><circle cx="812.1" cy="758.0" r="1.3"/><circle cx="812.1" cy="765.5" r="1.3"/><circle cx="812.1" cy="767.9" r="1.3"/><circle cx="812.1" cy="770.3" r="1.3"/><circle cx="812.1" cy="772.9" r="1.3"/><circle cx="812.1" cy="775.8" r="1.3"/><circle cx="819.4" cy="668.5" r="1.3"/><circle cx="819.4" cy="678.4" r="1.3"/><circle cx="819.4" cy="717.5" r="1.3"/><circle cx="819.4" cy="727.8" r="1.3"/><circle cx="819.4" cy="752.7" r="1.3"/><circle cx="819.4" cy="773.8" r="1.3"/><circle cx="826.6" cy="693.0" r="1.3"/><circle cx="826.6" cy="701.3" r="1.3"/><circle cx="826.6" cy="737.9" r="1.3"/><circle cx="826.6" cy="748.2" r="1.3"/><circle cx="826.6" cy="770.9" r="1.3"/><circle cx="833.9" cy="717.9" r="1.3"/><circle cx="833.9" cy="724.1" r="1.3"/><circle cx="833.9" cy="757.6" r="1.3"/><circle cx="833.9" cy="768.9" r="1.3"/><circle cx="841.2" cy="740.7" r="1.3"/><circle cx="841.2" cy="745.2" r="1.3"/><circle cx="841.2" cy="776.2" r="1.3"/><circle cx="848.4" cy="760.4" r="1.3"/><circle cx="848.4" cy="763.4" r="1.3"/><circle cx="855.7" cy="776.8" r="1.3"/><circle cx="855.7" cy="778.8" r="1.3"/><circle cx="964.6" cy="765.9" r="1.3"/><circle cx="964.6" cy="767.7" r="1.3"/><circle cx="964.6" cy="772.3" r="1.3"/><circle cx="964.6" cy="779.6" r="1.3"/><circle cx="971.9" cy="747.6" r="1.3"/><circle cx="971.9" cy="750.3" r="1.3"/><circle cx="971.9" cy="752.7" r="1.3"/><circle cx="971.9" cy="757.7" r="1.3"/><circle cx="971.9" cy="760.8" r="1.3"/><circle cx="971.9" cy="768.1" r="1.3"/><circle cx="971.9" cy="770.8" r="1.3"/><circle cx="979.1" cy="725.3" r="1.3"/><circle cx="979.1" cy="730.8" r="1.3"/><circle cx="979.1" cy="740.8" r="1.3"/><circle cx="979.1" cy="754.0" r="1.3"/><circle cx="979.1" cy="756.4" r="1.3"/><circle cx="979.1" cy="768.1" r="1.3"/><circle cx="979.1" cy="774.1" r="1.3"/><circle cx="986.4" cy="700.6" r="1.3"/><circle cx="986.4" cy="707.9" r="1.3"/><circle cx="986.4" cy="720.5" r="1.3"/><circle cx="986.4" cy="722.9" r="1.3"/><circle cx="986.4" cy="737.5" r="1.3"/><circle cx="986.4" cy="743.4" r="1.3"/><circle cx="986.4" cy="756.4" r="1.3"/><circle cx="986.4" cy="767.7" r="1.3"/><circle cx="986.4" cy="775.4" r="1.3"/><circle cx="993.7" cy="675.7" r="1.3"/><circle cx="993.7" cy="684.9" r="1.3"/><circle cx="993.7" cy="701.3" r="1.3"/><circle cx="993.7" cy="705.0" r="1.3"/><circle cx="993.7" cy="722.9" r="1.3"/><circle cx="993.7" cy="731.5" r="1.3"/><circle cx="993.7" cy="746.7" r="1.3"/><circle cx="993.7" cy="762.8" r="1.3"/><circle cx="993.7" cy="770.8" r="1.3"/><circle cx="1001.0" cy="652.5" r="1.3"/><circle cx="1001.0" cy="663.9" r="1.3"/><circle cx="1001.0" cy="684.5" r="1.3"/><circle cx="1001.0" cy="689.1" r="1.3"/><circle cx="1001.0" cy="710.7" r="1.3"/><circle cx="1001.0" cy="722.0" r="1.3"/><circle cx="1001.0" cy="739.4" r="1.3"/><circle cx="1001.0" cy="760.0" r="1.3"/><circle cx="1001.0" cy="767.7" r="1.3"/><circle cx="1008.2" cy="633.7" r="1.3"/><circle cx="1008.2" cy="648.0" r="1.3"/><circle cx="1008.2" cy="672.3" r="1.3"/><circle cx="1008.2" cy="678.1" r="1.3"/><circle cx="1008.2" cy="702.8" r="1.3"/><circle cx="1008.2" cy="716.9" r="1.3"/><circle cx="1008.2" cy="735.2" r="1.3"/><circle cx="1008.2" cy="760.4" r="1.3"/><circle cx="1008.2" cy="766.2" r="1.3"/><circle cx="1015.5" cy="621.8" r="1.3"/><circle cx="1015.5" cy="638.3" r="1.3"/><circle cx="1015.5" cy="666.2" r="1.3"/><circle cx="1015.5" cy="673.6" r="1.3"/><circle cx="1015.5" cy="700.1" r="1.3"/><circle cx="1015.5" cy="717.6" r="1.3"/><circle cx="1015.5" cy="735.2" r="1.3"/><circle cx="1015.5" cy="765.0" r="1.3"/><circle cx="1015.5" cy="767.7" r="1.3"/><circle cx="1022.8" cy="618.7" r="1.3"/><circle cx="1022.8" cy="637.9" r="1.3"/><circle cx="1022.8" cy="668.1" r="1.3"/><circle cx="1022.8" cy="677.2" r="1.3"/><circle cx="1022.8" cy="703.7" r="1.3"/><circle cx="1022.8" cy="725.7" r="1.3"/><circle cx="1022.8" cy="739.4" r="1.3"/><circle cx="1022.8" cy="772.3" r="1.3"/><circle cx="1030.0" cy="624.6" r="1.3"/><circle cx="1030.0" cy="645.2" r="1.3"/><circle cx="1030.0" cy="647.4" r="1.3"/><circle cx="1030.0" cy="677.6" r="1.3"/><circle cx="1030.0" cy="690.0" r="1.3"/><circle cx="1030.0" cy="713.8" r="1.3"/><circle cx="1030.0" cy="740.6" r="1.3"/><circle cx="1030.0" cy="749.1" r="1.3"/><circle cx="1037.3" cy="639.2" r="1.3"/><circle cx="1037.3" cy="661.1" r="1.3"/><circle cx="1037.3" cy="664.4" r="1.3"/><circle cx="1037.3" cy="694.0" r="1.3"/><circle cx="1037.3" cy="710.1" r="1.3"/><circle cx="1037.3" cy="729.3" r="1.3"/><circle cx="1037.3" cy="761.3" r="1.3"/><circle cx="1037.3" cy="763.1" r="1.3"/><circle cx="1044.6" cy="659.5" r="1.3"/><circle cx="1044.6" cy="682.7" r="1.3"/><circle cx="1044.6" cy="687.6" r="1.3"/><circle cx="1044.6" cy="715.6" r="1.3"/><circle cx="1044.6" cy="736.3" r="1.3"/><circle cx="1044.6" cy="749.1" r="1.3"/><circle cx="1051.8" cy="684.0" r="1.3"/><circle cx="1051.8" cy="707.9" r="1.3"/><circle cx="1051.8" cy="714.1" r="1.3"/><circle cx="1051.8" cy="739.9" r="1.3"/><circle cx="1051.8" cy="765.5" r="1.3"/><circle cx="1051.8" cy="771.0" r="1.3"/><circle cx="1059.1" cy="707.9" r="1.3"/><circle cx="1059.1" cy="733.9" r="1.3"/><circle cx="1059.1" cy="741.6" r="1.3"/><circle cx="1059.1" cy="765.0" r="1.3"/><circle cx="1066.4" cy="731.1" r="1.3"/><circle cx="1066.4" cy="733.0" r="1.3"/><circle cx="1066.4" cy="759.1" r="1.3"/><circle cx="1066.4" cy="768.3" r="1.3"/><circle cx="1073.7" cy="752.7" r="1.3"/><circle cx="1073.7" cy="754.9" r="1.3"/><circle cx="1080.9" cy="770.4" r="1.3"/><circle cx="1080.9" cy="773.2" r="1.3"/></g>
<g fill="#4a8ce0"><circle cx="804.8" cy="855.5" r="1.35"/><circle cx="812.1" cy="855.5" r="1.35"/><circle cx="783.0" cy="861.7" r="1.35"/><circle cx="790.3" cy="861.7" r="1.35"/><circle cx="797.5" cy="861.7" r="1.35"/><circle cx="804.8" cy="861.7" r="1.35"/><circle cx="783.0" cy="868.0" r="1.35"/><circle cx="790.3" cy="868.0" r="1.35"/><circle cx="797.5" cy="880.6" r="1.35"/><circle cx="804.8" cy="880.6" r="1.35"/><circle cx="783.0" cy="886.8" r="1.35"/><circle cx="790.3" cy="886.8" r="1.35"/><circle cx="797.5" cy="886.8" r="1.35"/><circle cx="804.8" cy="886.8" r="1.35"/><circle cx="812.1" cy="886.8" r="1.35"/><circle cx="819.4" cy="886.8" r="1.35"/><circle cx="826.6" cy="886.8" r="1.35"/><circle cx="783.0" cy="893.2" r="1.35"/><circle cx="790.3" cy="893.2" r="1.35"/><circle cx="797.5" cy="893.2" r="1.35"/><circle cx="804.8" cy="893.2" r="1.35"/><circle cx="812.1" cy="893.2" r="1.35"/><circle cx="819.4" cy="893.2" r="1.35"/><circle cx="826.6" cy="893.2" r="1.35"/><circle cx="833.9" cy="893.2" r="1.35"/><circle cx="841.2" cy="893.2" r="1.35"/><circle cx="783.0" cy="899.5" r="1.35"/><circle cx="790.3" cy="899.5" r="1.35"/><circle cx="797.5" cy="899.5" r="1.35"/><circle cx="804.8" cy="899.5" r="1.35"/><circle cx="812.1" cy="899.5" r="1.35"/><circle cx="819.4" cy="899.5" r="1.35"/><circle cx="826.6" cy="899.5" r="1.35"/><circle cx="833.9" cy="899.5" r="1.35"/><circle cx="841.2" cy="899.5" r="1.35"/><circle cx="848.4" cy="899.5" r="1.35"/><circle cx="855.7" cy="899.5" r="1.35"/><circle cx="783.0" cy="905.8" r="1.35"/><circle cx="790.3" cy="905.8" r="1.35"/><circle cx="797.5" cy="905.8" r="1.35"/><circle cx="804.8" cy="905.8" r="1.35"/><circle cx="812.1" cy="905.8" r="1.35"/><circle cx="819.4" cy="905.8" r="1.35"/><circle cx="826.6" cy="905.8" r="1.35"/><circle cx="833.9" cy="905.8" r="1.35"/><circle cx="841.2" cy="905.8" r="1.35"/><circle cx="848.4" cy="905.8" r="1.35"/><circle cx="855.7" cy="905.8" r="1.35"/><circle cx="783.0" cy="912.0" r="1.35"/><circle cx="790.3" cy="912.0" r="1.35"/><circle cx="797.5" cy="912.0" r="1.35"/><circle cx="804.8" cy="912.0" r="1.35"/><circle cx="812.1" cy="912.0" r="1.35"/><circle cx="819.4" cy="912.0" r="1.35"/><circle cx="826.6" cy="912.0" r="1.35"/><circle cx="833.9" cy="912.0" r="1.35"/><circle cx="783.0" cy="918.3" r="1.35"/><circle cx="790.3" cy="918.3" r="1.35"/><circle cx="797.5" cy="918.3" r="1.35"/><circle cx="804.8" cy="918.3" r="1.35"/><circle cx="812.1" cy="918.3" r="1.35"/><circle cx="783.0" cy="924.6" r="1.35"/><circle cx="790.3" cy="924.6" r="1.35"/><circle cx="797.5" cy="924.6" r="1.35"/><circle cx="804.8" cy="924.6" r="1.35"/><circle cx="812.1" cy="924.6" r="1.35"/><circle cx="783.0" cy="930.9" r="1.35"/><circle cx="790.3" cy="930.9" r="1.35"/><circle cx="797.5" cy="930.9" r="1.35"/><circle cx="804.8" cy="930.9" r="1.35"/><circle cx="812.1" cy="930.9" r="1.35"/><circle cx="783.0" cy="937.2" r="1.35"/><circle cx="790.3" cy="937.2" r="1.35"/><circle cx="797.5" cy="937.2" r="1.35"/><circle cx="804.8" cy="937.2" r="1.35"/><circle cx="812.1" cy="937.2" r="1.35"/><circle cx="783.0" cy="943.5" r="1.35"/><circle cx="790.3" cy="943.5" r="1.35"/><circle cx="797.5" cy="943.5" r="1.35"/><circle cx="804.8" cy="943.5" r="1.35"/><circle cx="812.1" cy="943.5" r="1.35"/><circle cx="790.3" cy="949.8" r="1.35"/><circle cx="797.5" cy="949.8" r="1.35"/><circle cx="804.8" cy="949.8" r="1.35"/><circle cx="812.1" cy="949.8" r="1.35"/><circle cx="819.4" cy="949.8" r="1.35"/><circle cx="979.2" cy="880.5" r="1.35"/><circle cx="986.5" cy="880.5" r="1.35"/><circle cx="993.8" cy="880.5" r="1.35"/><circle cx="1001.1" cy="880.5" r="1.35"/><circle cx="1008.3" cy="880.5" r="1.35"/><circle cx="1015.6" cy="880.5" r="1.35"/><circle cx="1022.9" cy="880.5" r="1.35"/><circle cx="964.7" cy="886.8" r="1.35"/><circle cx="972.0" cy="886.8" r="1.35"/><circle cx="979.2" cy="886.8" r="1.35"/><circle cx="986.5" cy="886.8" r="1.35"/><circle cx="993.8" cy="886.8" r="1.35"/><circle cx="1001.1" cy="886.8" r="1.35"/><circle cx="1008.3" cy="886.8" r="1.35"/><circle cx="1015.6" cy="886.8" r="1.35"/><circle cx="1022.9" cy="886.8" r="1.35"/><circle cx="1030.1" cy="886.8" r="1.35"/><circle cx="1037.4" cy="886.8" r="1.35"/><circle cx="964.7" cy="893.1" r="1.35"/><circle cx="972.0" cy="893.1" r="1.35"/><circle cx="979.2" cy="893.1" r="1.35"/><circle cx="986.5" cy="893.1" r="1.35"/><circle cx="993.8" cy="893.1" r="1.35"/><circle cx="1001.1" cy="893.1" r="1.35"/><circle cx="1008.3" cy="893.1" r="1.35"/><circle cx="1015.6" cy="893.1" r="1.35"/><circle cx="1022.9" cy="893.1" r="1.35"/><circle cx="1030.1" cy="893.1" r="1.35"/><circle cx="1037.4" cy="893.1" r="1.35"/><circle cx="1044.7" cy="893.1" r="1.35"/><circle cx="1051.9" cy="893.1" r="1.35"/><circle cx="964.7" cy="899.4" r="1.35"/><circle cx="972.0" cy="899.4" r="1.35"/><circle cx="979.2" cy="899.4" r="1.35"/><circle cx="986.5" cy="899.4" r="1.35"/><circle cx="993.8" cy="899.4" r="1.35"/><circle cx="1001.1" cy="899.4" r="1.35"/><circle cx="1008.3" cy="899.4" r="1.35"/><circle cx="1015.6" cy="899.4" r="1.35"/><circle cx="1022.9" cy="899.4" r="1.35"/><circle cx="1030.1" cy="899.4" r="1.35"/><circle cx="1037.4" cy="899.4" r="1.35"/><circle cx="1044.7" cy="899.4" r="1.35"/><circle cx="1051.9" cy="899.4" r="1.35"/><circle cx="1059.2" cy="899.4" r="1.35"/><circle cx="1066.5" cy="899.4" r="1.35"/><circle cx="964.7" cy="905.7" r="1.35"/><circle cx="972.0" cy="905.7" r="1.35"/><circle cx="979.2" cy="905.7" r="1.35"/><circle cx="986.5" cy="905.7" r="1.35"/><circle cx="993.8" cy="905.7" r="1.35"/><circle cx="1001.1" cy="905.7" r="1.35"/><circle cx="1008.3" cy="905.7" r="1.35"/><circle cx="1015.6" cy="905.7" r="1.35"/><circle cx="1022.9" cy="905.7" r="1.35"/><circle cx="1030.1" cy="905.7" r="1.35"/><circle cx="1037.4" cy="905.7" r="1.35"/><circle cx="1044.7" cy="905.7" r="1.35"/><circle cx="1051.9" cy="905.7" r="1.35"/><circle cx="1059.2" cy="905.7" r="1.35"/><circle cx="1066.5" cy="905.7" r="1.35"/><circle cx="1073.8" cy="905.7" r="1.35"/><circle cx="1081.0" cy="905.7" r="1.35"/><circle cx="964.7" cy="912.0" r="1.35"/><circle cx="972.0" cy="912.0" r="1.35"/><circle cx="979.2" cy="912.0" r="1.35"/><circle cx="986.5" cy="912.0" r="1.35"/><circle cx="993.8" cy="912.0" r="1.35"/><circle cx="1001.1" cy="912.0" r="1.35"/><circle cx="1008.3" cy="912.0" r="1.35"/><circle cx="1015.6" cy="912.0" r="1.35"/><circle cx="1022.9" cy="912.0" r="1.35"/><circle cx="1030.1" cy="912.0" r="1.35"/><circle cx="1037.4" cy="912.0" r="1.35"/><circle cx="1044.7" cy="912.0" r="1.35"/><circle cx="1051.9" cy="912.0" r="1.35"/><circle cx="1059.2" cy="912.0" r="1.35"/><circle cx="1066.5" cy="912.0" r="1.35"/><circle cx="1073.8" cy="912.0" r="1.35"/><circle cx="1081.0" cy="912.0" r="1.35"/><circle cx="964.7" cy="918.4" r="1.35"/><circle cx="972.0" cy="918.4" r="1.35"/><circle cx="979.2" cy="918.4" r="1.35"/><circle cx="986.5" cy="918.4" r="1.35"/><circle cx="993.8" cy="918.4" r="1.35"/><circle cx="1001.1" cy="918.4" r="1.35"/><circle cx="1008.3" cy="918.4" r="1.35"/><circle cx="1015.6" cy="918.4" r="1.35"/><circle cx="1022.9" cy="918.4" r="1.35"/><circle cx="1030.1" cy="918.4" r="1.35"/><circle cx="1037.4" cy="918.4" r="1.35"/><circle cx="1044.7" cy="918.4" r="1.35"/><circle cx="1051.9" cy="918.4" r="1.35"/><circle cx="1059.2" cy="918.4" r="1.35"/><circle cx="1066.5" cy="918.4" r="1.35"/><circle cx="964.7" cy="924.7" r="1.35"/><circle cx="972.0" cy="924.7" r="1.35"/><circle cx="979.2" cy="924.7" r="1.35"/><circle cx="986.5" cy="924.7" r="1.35"/><circle cx="993.8" cy="924.7" r="1.35"/><circle cx="1001.1" cy="924.7" r="1.35"/><circle cx="1008.3" cy="924.7" r="1.35"/><circle cx="1015.6" cy="924.7" r="1.35"/><circle cx="1022.9" cy="924.7" r="1.35"/><circle cx="1030.1" cy="924.7" r="1.35"/><circle cx="1037.4" cy="924.7" r="1.35"/><circle cx="1044.7" cy="924.7" r="1.35"/><circle cx="1051.9" cy="924.7" r="1.35"/><circle cx="1059.2" cy="924.7" r="1.35"/><circle cx="972.0" cy="931.0" r="1.35"/><circle cx="979.2" cy="931.0" r="1.35"/><circle cx="986.5" cy="931.0" r="1.35"/><circle cx="993.8" cy="931.0" r="1.35"/><circle cx="1001.1" cy="931.0" r="1.35"/><circle cx="1008.3" cy="931.0" r="1.35"/><circle cx="1015.6" cy="931.0" r="1.35"/><circle cx="1022.9" cy="931.0" r="1.35"/><circle cx="1030.1" cy="931.0" r="1.35"/><circle cx="1037.4" cy="931.0" r="1.35"/><circle cx="1044.7" cy="931.0" r="1.35"/><circle cx="1051.9" cy="931.0" r="1.35"/><circle cx="979.2" cy="937.3" r="1.35"/><circle cx="986.5" cy="937.3" r="1.35"/><circle cx="993.8" cy="937.3" r="1.35"/><circle cx="1001.1" cy="937.3" r="1.35"/><circle cx="1008.3" cy="937.3" r="1.35"/><circle cx="1015.6" cy="937.3" r="1.35"/><circle cx="1022.9" cy="937.3" r="1.35"/><circle cx="1030.1" cy="937.3" r="1.35"/><circle cx="1037.4" cy="937.3" r="1.35"/><circle cx="986.5" cy="943.6" r="1.35"/><circle cx="993.8" cy="943.6" r="1.35"/><circle cx="1001.1" cy="943.6" r="1.35"/><circle cx="1008.3" cy="943.6" r="1.35"/><circle cx="1015.6" cy="943.6" r="1.35"/><circle cx="1022.9" cy="943.6" r="1.35"/></g>
</svg>
<!-- /canvas content -->
<!-- PlotDataSelect dialog -->
<div class="a" style="left:101px;top:213px;width:641px;height:581px;background:#ececec;border:2px solid #000;box-shadow:0px 2px 5px 1px rgba(0,0,0,0.35)">
 <div class="a" style="left:0;top:3px;width:637px;text-align:center;padding-left:4px;font-weight:bold;font-size:11.5px;color:#4b5866;letter-spacing:1.0px">PlotDataSelect</div>
 <div class="a" style="left:619px;top:0px;width:18px;height:16px;border:2px solid #000;border-radius:0 0 0 5px;border-top:none;border-right:none;background:#ececec"></div>
 <svg class="a" style="left:624px;top:2px" width="12" height="12"><path d="M2.5 2.5 L9.5 9.5 M9.5 2.5 L2.5 9.5" stroke="#2a3036" stroke-width="2.2"/></svg>
 <div class="a" style="left:0;top:32px;width:637px;text-align:center;font-weight:bold;font-size:18.5px;color:#1a1a1a">Select</div>
 <!-- table -->
 <div class="a" style="left:11px;top:59px;width:615px;height:507px;background:#fff;border-top:1px solid #a0a0a0;border-left:1px solid #c8c8c8;border-bottom:1px solid #d0d0d0;border-right:1px solid #d0d0d0"></div>
</div>
<div class="a" style="left:114px;top:275px;width:491px;height:22px;background:#dbd7d4;border-bottom:2px solid #c9c5c2"></div>
<div class="a" style="left:605px;top:275px;width:106px;height:22px;background:#ececec"></div>
<div class="a th" style="left:114px;width:79px">x</div>
<div class="a th" style="left:193px;width:76px">y</div>
<div class="a th" style="left:269px;width:336px">f(x,y)=exp(sin(x))*exp(cos(y))-exp(sin(x*y))+exp(cos(x*y))</div>
<div class="a dots" style="left:192px;top:281px"></div><div class="a dots" style="left:268px;top:281px"></div><div class="a dots" style="left:604px;top:281px"></div>
<!-- predicate row -->
<div class="a" style="left:115px;top:297px;width:78px;height:30px;background:#fff;border:1px dotted #333"></div>
<div class="a td" style="left:119px;top:297px;color:#111">No Predicate</div>
<div class="a td" style="left:193px;top:297px;width:73px;text-align:right">in [-3, 3]</div>
<div class="a td" style="left:269px;top:297px;width:333px;text-align:right">&gt; 4</div>
<div class="a" style="left:269px;top:297px;width:1px;height:30px;background:#d4d4d4"></div>
<div class="a" style="left:605px;top:297px;width:1px;height:483px;background:#d4d4d4"></div>
<!-- data rows -->
<div class="a" style="left:115px;top:327px;width:154px;height:453px;background:#c8c8c8"></div>
<div class="a" style="left:269px;top:327px;width:336px;height:453px;background:#efefef"></div>
<div class="a" style="left:114px;top:327px;width:491px;height:453px;overflow:hidden">
<div class="tr" style="top:0px"><span class="cx">-5</span><span class="cy">-1.2</span><span class="cf">5.60414</span></div>
<div class="tr" style="top:30px"><span class="cx">-5</span><span class="cy">-1</span><span class="cf">5.4229</span></div>
<div class="tr" style="top:60px"><span class="cx">-5</span><span class="cy">-0.8</span><span class="cf">5.28737</span></div>
<div class="tr" style="top:90px"><span class="cx">-5</span><span class="cy">-0.6</span><span class="cf">5.17519</span></div>
<div class="tr" style="top:120px"><span class="cx">-5</span><span class="cy">-0.4</span><span class="cf">4.73041</span></div>
<div class="tr" style="top:150px"><span class="cx">-5</span><span class="cy">-0.2</span><span class="cf">6.34848</span></div>
<div class="tr" style="top:180px"><span class="cx">-5</span><span class="cy">7.45058e-08</span><span class="cf">8.80998</span></div>
<div class="tr" style="top:210px"><span class="cx">-5</span><span class="cy">0.2</span><span class="cf">8.23718</span></div>
<div class="tr" style="top:240px"><span class="cx">-5</span><span class="cy">0.4</span><span class="cf">6.81018</span></div>
<div class="tr" style="top:270px"><span class="cx">-5</span><span class="cy">0.6</span><span class="cf">5.45836</span></div>
<div class="tr" style="top:300px"><span class="cx">-5</span><span class="cy">1.2</span><span class="cf">5.03801</span></div>
<div class="tr" style="top:330px"><span class="cx">-5</span><span class="cy">1.4</span><span class="cf">4.69909</span></div>
<div class="tr" style="top:360px"><span class="cx">-4.8</span><span class="cy">-1.4</span><span class="cf">4.1576</span></div>
<div class="tr" style="top:390px"><span class="cx">-4.8</span><span class="cy">-1.2</span><span class="cf">5.66163</span></div>
<div class="tr" style="top:420px"><span class="cx">-4.8</span><span class="cy">-1</span><span class="cf">5.37029</span></div>
</div>
<!-- scrollbar -->
<div class="a" style="left:711px;top:276px;width:17px;height:504px;background:repeating-conic-gradient(#bdbdbd 0 25%,#e4e4e4 0 50%) 0 0/2px 2px;border-left:1px solid #d8d8d8"></div>
<div class="a sbbtn" style="left:712px;top:277px"></div>
<div class="a" style="left:713px;top:296px;width:14px;height:30px;border-radius:5px;background:#383838;border:1px solid #222"></div>
<div class="a sbbtn" style="left:712px;top:763px"></div>
</body></html>
